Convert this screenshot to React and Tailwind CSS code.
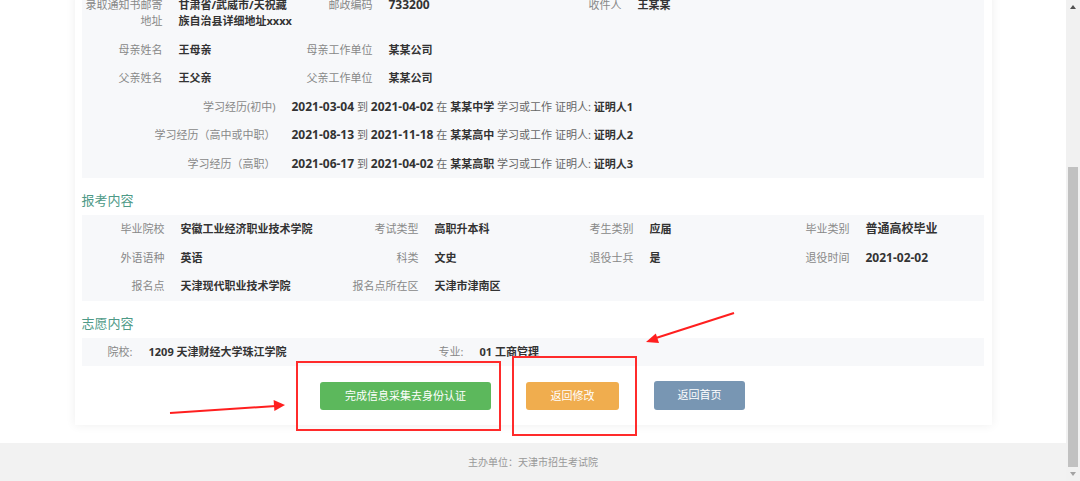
const Label = ({ w, children }) => (
  <div className={`${w} shrink-0 pr-4 text-right text-[#888]`}>{children}</div>
);

const Value = ({ w, children }) => (
  <div className={`${w} shrink-0 whitespace-nowrap font-bold text-[#333]`}>{children}</div>
);

const SectionTitle = ({ children }) => (
  <div className="pb-[7px] pt-[14px] text-[13px] leading-[16px] text-[#4e9a87]">{children}</div>
);

const StudyRow = ({ label, from, to, school, witness }) => (
  <div className="flex h-[28.5px] items-center">
    <div className="w-[210px] shrink-0 pr-4 text-right text-[#888]">{label}</div>
    <div className="whitespace-nowrap text-[#666]">
      <span className="text-[12px] font-bold text-[#333]">{from}</span> 到{' '}
      <span className="text-[12px] font-bold text-[#333]">{to}</span> 在{' '}
      <span className="font-bold text-[#333]">{school}</span> 学习或工作 证明人:{' '}
      <span className="font-bold text-[#333]">{witness}</span>
    </div>
  </div>
);

const studies = [
  { label: '学习经历(初中)', from: '2021-03-04', to: '2021-04-02', school: '某某中学', witness: '证明人1' },
  { label: '学习经历（高中或中职）', from: '2021-08-13', to: '2021-11-18', school: '某某高中', witness: '证明人2' },
  { label: '学习经历（高职）', from: '2021-06-17', to: '2021-04-02', school: '某某高职', witness: '证明人3' },
];

const examRows = [
  ['毕业院校', '安徽工业经济职业技术学院', '考试类型', '高职升本科', '考生类别', '应届', '毕业类别', '普通高校毕业'],
  ['外语语种', '英语', '科类', '文史', '退役士兵', '是', '退役时间', '2021-02-02'],
  ['报名点', '天津现代职业技术学院', '报名点所在区', '天津市津南区', '', '', '', ''],
];

const Scrollbar = () => (
  <div className="flex w-[14px] shrink-0 flex-col bg-[#f1f1f1]">
    <div className="flex h-[14px] items-center justify-center">
      <div className="h-0 w-0 border-x-[3.5px] border-b-[4px] border-x-transparent border-b-[#505050]" />
    </div>
    <div className="h-[153px]" />
    <div className="mx-[2px] h-[300px] bg-[#c1c1c1]" />
    <div className="flex flex-1 items-center justify-center">
      <div className="h-0 w-0 border-x-[3.5px] border-t-[4px] border-x-transparent border-t-[#a3a3a3]" />
    </div>
  </div>
);

const Annotations = () => (
  <svg className="pointer-events-none absolute left-0 top-0" width="1080" height="481">
    <rect x="297" y="362" width="203" height="68" fill="none" stroke="#ff2b2b" strokeWidth="2" />
    <rect x="513" y="357" width="123" height="78" fill="none" stroke="#ff2b2b" strokeWidth="2" />
    <line x1="170" y1="413" x2="276" y2="406" stroke="#ff1f1f" strokeWidth="2" />
    <polygon points="285,405 274.4,411 273.6,400" fill="#ff1f1f" />
    <line x1="734" y1="313" x2="656" y2="338" stroke="#ff1f1f" strokeWidth="2" />
    <polygon points="646,342 659,343 655.8,333.5" fill="#ff1f1f" />
  </svg>
);

export default function App() {
  return (
    <div className="relative flex h-[481px] w-[1080px] overflow-hidden bg-white font-['Noto_Sans','Noto_Sans_CJK_SC',sans-serif] text-[11px]">
      <div className="flex min-h-0 flex-1 flex-col justify-end overflow-hidden">
        <div className="mx-auto mb-[18px] w-[917px] shrink-0 bg-white pl-[7px] pr-[8px] pb-[15px] shadow-[0_0_10px_rgba(0,0,0,0.07)]">
          {/* 基本信息 */}
          <div className="bg-[#f7f8fa]">
            <div className="flex items-start py-[6px] leading-[16.5px]">
              <Label w="w-[97px]">录取通知书邮寄<br />地址</Label>
              <Value w="w-[113px]">甘肃省/武威市/天祝藏<br />族自治县详细地址xxxx</Value>
              <Label w="w-[97px]">邮政编码</Label>
              <Value w="w-[152px] text-[12px]">733200</Value>
              <Label w="w-[97px]">收件人</Label>
              <Value w="w-[150px]">王某某</Value>
            </div>
            <div className="flex h-[28.5px] items-center">
              <Label w="w-[97px]">母亲姓名</Label>
              <Value w="w-[113px]">王母亲</Value>
              <Label w="w-[97px]">母亲工作单位</Label>
              <Value w="w-[152px]">某某公司</Value>
            </div>
            <div className="flex h-[28.5px] items-center">
              <Label w="w-[97px]">父亲姓名</Label>
              <Value w="w-[113px]">王父亲</Value>
              <Label w="w-[97px]">父亲工作单位</Label>
              <Value w="w-[152px]">某某公司</Value>
            </div>
            {studies.map((s) => (
              <StudyRow key={s.label} {...s} />
            ))}
          </div>

          <SectionTitle>报考内容</SectionTitle>
          <div className="bg-[#f7f8fa]">
            {examRows.map((r) => (
              <div key={r[0]} className="flex h-[28.5px] items-center">
                <Label w="w-[99px]">{r[0]}</Label>
                <Value w="w-[155px]">{r[1]}</Value>
                <Label w="w-[99px]">{r[2]}</Label>
                <Value w="w-[116px]">{r[3]}</Value>
                <Label w="w-[99px]">{r[4]}</Label>
                <Value w="w-[117px]">{r[5]}</Value>
                <Label w="w-[99px]">{r[6]}</Label>
                <Value w="w-[118px] text-[12px]">{r[7]}</Value>
              </div>
            ))}
          </div>

          <SectionTitle>志愿内容</SectionTitle>
          <div className="flex h-[28.5px] items-center bg-[#f7f8fa]">
            <Label w="w-[67px]">院校:</Label>
            <Value w="w-[264px]">1209 天津财经大学珠江学院</Value>
            <Label w="w-[67px]">专业:</Label>
            <Value w="w-[200px]">01 工商管理</Value>
          </div>

          <div className="flex h-[44px] items-end justify-center gap-[35px]">
            <button className="h-[28px] w-[171px] rounded-[3px] bg-[#5cb85c] text-white">完成信息采集去身份认证</button>
            <button className="h-[28px] w-[93px] rounded-[3px] bg-[#f0ad4e] text-white">返回修改</button>
            <button className="h-[29px] w-[91px] rounded-[3px] bg-[#7896b3] text-white">返回首页</button>
          </div>
        </div>

        <footer className="flex h-[38px] shrink-0 items-center justify-center bg-[#f2f2f2] text-[10px] text-[#999]">
          主办单位：天津市招生考试院
        </footer>
      </div>
      <Scrollbar />
      <Annotations />
    </div>
  );
}
